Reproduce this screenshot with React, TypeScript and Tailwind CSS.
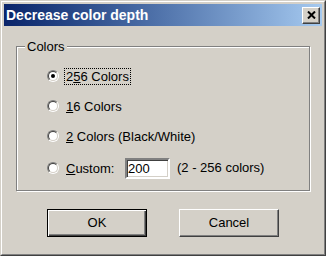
import React from 'react';

function Radio({ checked }: { checked?: boolean }) {
  return (
    <span className="box-border flex h-[12px] w-[12px] shrink-0 rounded-full border border-t-[#808080] border-l-[#808080] border-r-white border-b-white">
      <span className="box-border flex flex-1 items-center justify-center rounded-full border border-t-[#404040] border-l-[#404040] border-r-[#d4d0c8] border-b-[#d4d0c8] bg-white">
        {checked && <span className="h-[4px] w-[4px] rounded-full bg-black" />}
      </span>
    </span>
  );
}

function Option({
  checked,
  focused,
  children,
}: {
  checked?: boolean;
  focused?: boolean;
  children: React.ReactNode;
}) {
  return (
    <div className="flex h-[30px] items-center gap-[5px]">
      <Radio checked={checked} />
      <span
        className={`border border-dotted px-[1px] leading-[15px] ${
          focused ? 'border-black' : 'border-transparent'
        }`}
      >
        {children}
      </span>
    </div>
  );
}

export default function App() {
  return (
    <div className="box-border h-[256px] w-[326px] border border-t-[#d4d0c8] border-l-[#d4d0c8] border-r-[#404040] border-b-[#404040] bg-[#d4d0c8] font-['Liberation_Sans',Arial,sans-serif] text-[13px] text-black">
      <div className="box-border flex h-full flex-col border border-t-white border-l-white border-r-[#808080] border-b-[#808080] p-[2px]">
        {/* title bar */}
        <div className="flex h-[22px] items-center bg-gradient-to-r from-[#0a246a] to-[#a6caf0] pl-[2px] pr-[2px]">
          <span className="flex-1 text-[14px] font-bold leading-none text-white">Decrease color depth</span>
          <button className="box-border flex h-[17px] w-[18px] items-center justify-center border border-t-white border-l-white border-r-[#404040] border-b-[#404040] bg-[#d4d0c8] shadow-[inset_-1px_-1px_0_#808080]">
            <svg width="9" height="8" viewBox="0 0 9 8">
              <path d="M1 0.5 L8 7.5 M8 0.5 L1 7.5" stroke="black" strokeWidth="2" />
            </svg>
          </button>
        </div>

        {/* group box */}
        <div className="relative mx-[12px] mt-[20px] box-border h-[145px] border border-[#808080] pl-[30px] pt-[14px] shadow-[1px_1px_0_#fff,inset_1px_1px_0_#fff]">
          <span className="absolute -top-[8px] left-[8px] bg-[#d4d0c8] px-[2px] leading-[15px]">Colors</span>
          <Option checked focused>
            2<u>5</u>6 Colors
          </Option>
          <Option>
            <u>1</u>6 Colors
          </Option>
          <Option>
            <u>2</u> Colors (Black/White)
          </Option>
          <div className="mt-[2px] flex h-[30px] items-center gap-[5px]">
            <Radio />
            <span className="w-[56px] border border-transparent px-[1px] leading-[15px]">
              <u>C</u>ustom:
            </span>
            <input
              defaultValue="200"
              className="box-border h-[21px] w-[45px] border-2 border-t-[#808080] border-l-[#808080] border-r-white border-b-white bg-white pl-[1px] text-[13px] shadow-[inset_1px_1px_0_#404040,inset_-1px_-1px_0_#d4d0c8] outline-none"
            />
            <span className="ml-[2px]">(2 - 256 colors)</span>
          </div>
        </div>

        {/* buttons */}
        <div className="mt-[18px] flex justify-center gap-[32px]">
          <button className="box-border h-[28px] w-[100px] border border-black bg-[#d4d0c8] shadow-[inset_1px_1px_0_#fff,inset_-1px_-1px_0_#404040,inset_-2px_-2px_0_#808080]">
            OK
          </button>
          <button className="box-border h-[28px] w-[100px] border border-t-white border-l-white border-r-[#404040] border-b-[#404040] bg-[#d4d0c8] shadow-[inset_-1px_-1px_0_#808080]">
            Cancel
          </button>
        </div>
      </div>
    </div>
  );
}
